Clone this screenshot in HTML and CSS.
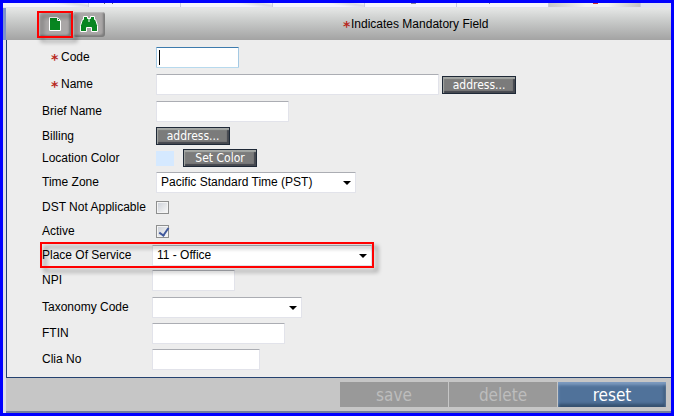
FILE: index.html
```
<!DOCTYPE html>
<html lang="en">
	<head>
		<meta charset="UTF-8">
		<title>Location</title>
		<link rel="stylesheet" href="styles.css">
	</head>
	<body>
		<div class="window">
			<div class="tabs">
				<span class="tab"></span>
				<span class="tab mark-pp"></span>
				<span class="tab"></span>
				<span class="tab"></span>
				<span class="tab mark-g"></span>
				<span class="tab mark-p"></span>
				<span class="tab tab-on"></span>
				<span class="tab-rest"></span>
			</div>
			<div class="toolbar">
				<div class="tools">
					<span class="tool-wrap marked">
						<button type="button" class="tool" aria-label="New">
							<svg width="12" height="14" viewBox="0 0 12 14"><path d="M.5.5h8l3 3v10H.5z" fill="#078520" stroke="#fff"/><path d="M8.500 1v2.500H11" fill="none" stroke="#fff"/></svg>
						</button>
					</span>
					<span class="tool-wrap">
						<button type="button" class="tool" aria-label="Search">
							<svg width="18" height="16" viewBox="0 0 18 16"><path d="M3.500.5h4v2h3v-2h4v3h1l2 6v6h-6v-4h-5v4h-6v-6l2-6h1z" fill="#078520" stroke="#fff"/><path d="M9 3v3" stroke="#fff"/></svg>
						</button>
					</span>
				</div>
				<p class="note"><span class="star">*</span>Indicates Mandatory Field</p>
			</div>
			<form class="form">
				<div class="row tall">
					<label class="must" for="code"><span class="star">*</span>Code</label>
					<input type="text" id="code" class="w83 focused">
				</div>
				<div class="row tall">
					<label class="must" for="name"><span class="star">*</span>Name</label>
					<input type="text" id="name" class="w283">
					<button type="button" class="btn">address...</button>
				</div>
				<div class="row tall">
					<label for="brief">Brief Name</label>
					<input type="text" id="brief" class="w133">
				</div>
				<div class="row short">
					<label for="billing">Billing</label>
					<button type="button" id="billing" class="btn">address...</button>
				</div>
				<div class="row short">
					<label for="color">Location Color</label>
					<span class="swatch"></span>
					<button type="button" id="color" class="btn">Set Color</button>
				</div>
				<div class="row">
					<label for="zone">Time Zone</label>
					<span class="select w200"><select id="zone"><option>Pacific Standard Time (PST)</option></select></span>
				</div>
				<div class="row check">
					<label for="dst">DST Not Applicable</label>
					<input type="checkbox" id="dst">
				</div>
				<div class="row check">
					<label for="active">Active</label>
					<input type="checkbox" id="active" checked>
				</div>
				<div class="row check narrow marked">
					<label for="place">Place Of Service</label>
					<span class="select w220"><select id="place"><option>11 - Office</option></select></span>
				</div>
				<div class="row tall narrow">
					<label for="npi">NPI</label>
					<input type="text" id="npi" class="w83">
				</div>
				<div class="row narrow">
					<label for="taxonomy">Taxonomy Code</label>
					<span class="select w150"><select id="taxonomy"><option></option></select></span>
				</div>
				<div class="row narrow">
					<label for="ftin">FTIN</label>
					<input type="text" id="ftin" class="w133">
				</div>
				<div class="row narrow">
					<label for="clia">Clia No</label>
					<input type="text" id="clia" class="w108">
				</div>
			</form>
			<div class="footer">
				<button type="button" disabled>save</button>
				<button type="button" disabled>delete</button>
				<button type="button" class="reset">reset</button>
			</div>
		</div>
	</body>
</html>
```
FILE: styles.css
```
*{margin:0;padding:0;box-sizing:border-box;}
body{font-family:"Liberation Sans",Arial,sans-serif;font-size:12px;color:#000;}
button,input,select{font-family:inherit;font-size:inherit;color:inherit;}
.window{display:flex;flex-direction:column;min-height:100vh;border:3px solid #00f;background:#dfe0ea;}

/* bottom edge of the tab strip */
.tabs{display:flex;height:5px;border-bottom:1px solid #e2e2ea;background:#f3f3fb;overflow:hidden;}
.tab{width:92px;flex:none;border-right:1px solid #c9cbe0;background:linear-gradient(10deg,#f4f4fc 65%,#dadbe4 85%,#f4f4fc);}
.tab:first-child{width:86px;}
.mark-pp{background:linear-gradient(#667,#667) 15px 0/1px 1px no-repeat,linear-gradient(#667,#667) 23px 0/1px 1px no-repeat,#f4f4fc;}
.mark-g{background:linear-gradient(#889,#889) 46px 0/5px 1px no-repeat,#f4f4fc;}
.mark-p{background:linear-gradient(#889,#889) 32px 0/1px 1px no-repeat,#f4f4fc;}
.tab-on{background:linear-gradient(#c33,#c33) 44px 0/5px 1px no-repeat,linear-gradient(90deg,#c8c8c8,#f2f2f2 40%,#f2f2f2 65%,#c4c4c4);}
.tab-rest{flex:1;background:#e0e3f0;}

.toolbar{display:flex;align-items:center;height:32px;border-left:3px solid #7d92cc;padding-left:33px;
	background:linear-gradient(#e5e7e6,#c9cbca 40%,#a3a3a3);}
.tools{display:flex;gap:2px;}
.tool-wrap{display:flex;width:32px;height:25px;}
.tool{display:flex;align-items:center;justify-content:center;width:100%;border:0;border-radius:3px;background:#aaa7a7;
	box-shadow:inset 1px 1px 1px #bdbdbd,inset -2px -2px 2px #7c7c7c;}
.note{margin-left:238px;}
.star{display:inline-block;width:8px;color:#b8281e;font:bold 14px/12px "DejaVu Sans",sans-serif;vertical-align:-3px;}

/* red call-out box */
.marked{position:relative;}
.marked:after{content:"";position:absolute;top:-1px;bottom:-1px;left:-2px;right:-2px;border:2px solid #f00;
	filter:drop-shadow(4px 4px 2px rgba(0,0,0,.4));pointer-events:none;}

.form{flex:1;margin-left:3px;padding:4px 0 5px 35px;border-left:1px solid #24426f;border-bottom:1px solid #24426f;background:#ededed;}
.row{display:flex;align-items:center;width:max-content;height:26px;}
.tall{height:27px;}
.short{height:22px;}
.check{height:24px;}
.row label{width:114px;padding-bottom:1px;white-space:nowrap;}
.row .must{padding:0 0 0 9px;}
.must .star{width:10px;}
.narrow label{width:110px;}

input[type=text],select{height:21px;padding:0 4px;border:1px solid #e2e3ea;border-top-color:#abadb3;border-radius:1px;background:#fff;}
input.focused{border-color:#3d7bad #a4c9e3 #b7d9ed;background:linear-gradient(#000,#000) 2px 2px/1px 15px no-repeat,#fff;}
.w83{width:83px;}
.w108{width:108px;}
.w133{width:133px;}
.w150{width:150px;}
.w200{width:200px;}
.w220{width:220px;}
.w283{width:283px;}
.select{position:relative;display:flex;}
.select:after{content:"";position:absolute;right:5px;top:9px;border:4px solid transparent;border-top-color:#000;border-bottom:0;pointer-events:none;}
select{width:100%;appearance:none;}
input[type=checkbox]{appearance:none;width:13px;height:13px;border:1px solid #8e8f8f;
	background:linear-gradient(135deg,#cfd3da,#f6f6f6) center/9px 9px no-repeat,#f4f4f4;}
input[type=checkbox]:checked:after{content:"";display:block;width:4px;height:8px;margin:0 0 0 4px;border:solid #41599c;border-width:0 2px 2px 0;transform:rotate(35deg);}

.btn{width:74px;height:18px;border:1px solid #1f2937;background:#7b7b7b;color:#fff;font:12px/14px "DejaVu Sans Condensed","DejaVu Sans",sans-serif;
	box-shadow:inset 1px 2px 1px #a5a8a5,inset -2px -2px 1px #45484f;}
.w283 + .btn{margin-left:3px;}
.swatch{width:18px;height:15px;margin-right:9px;background:#d5e9ff;}

.footer{display:flex;justify-content:flex-end;gap:1px;margin-left:3px;padding:4px 5px;background:#c6c6c6;border-bottom:2px solid #74809c;}
.footer button{width:108px;height:25px;border:0;background:#999;color:#bdbdbd;font:17px/24px "DejaVu Sans Condensed","DejaVu Sans",sans-serif;}
.footer .reset{background:#50729a;color:#fff;box-shadow:inset 0 3px 3px #7d9bc0,inset -2px -3px 3px #35506f;}
```
